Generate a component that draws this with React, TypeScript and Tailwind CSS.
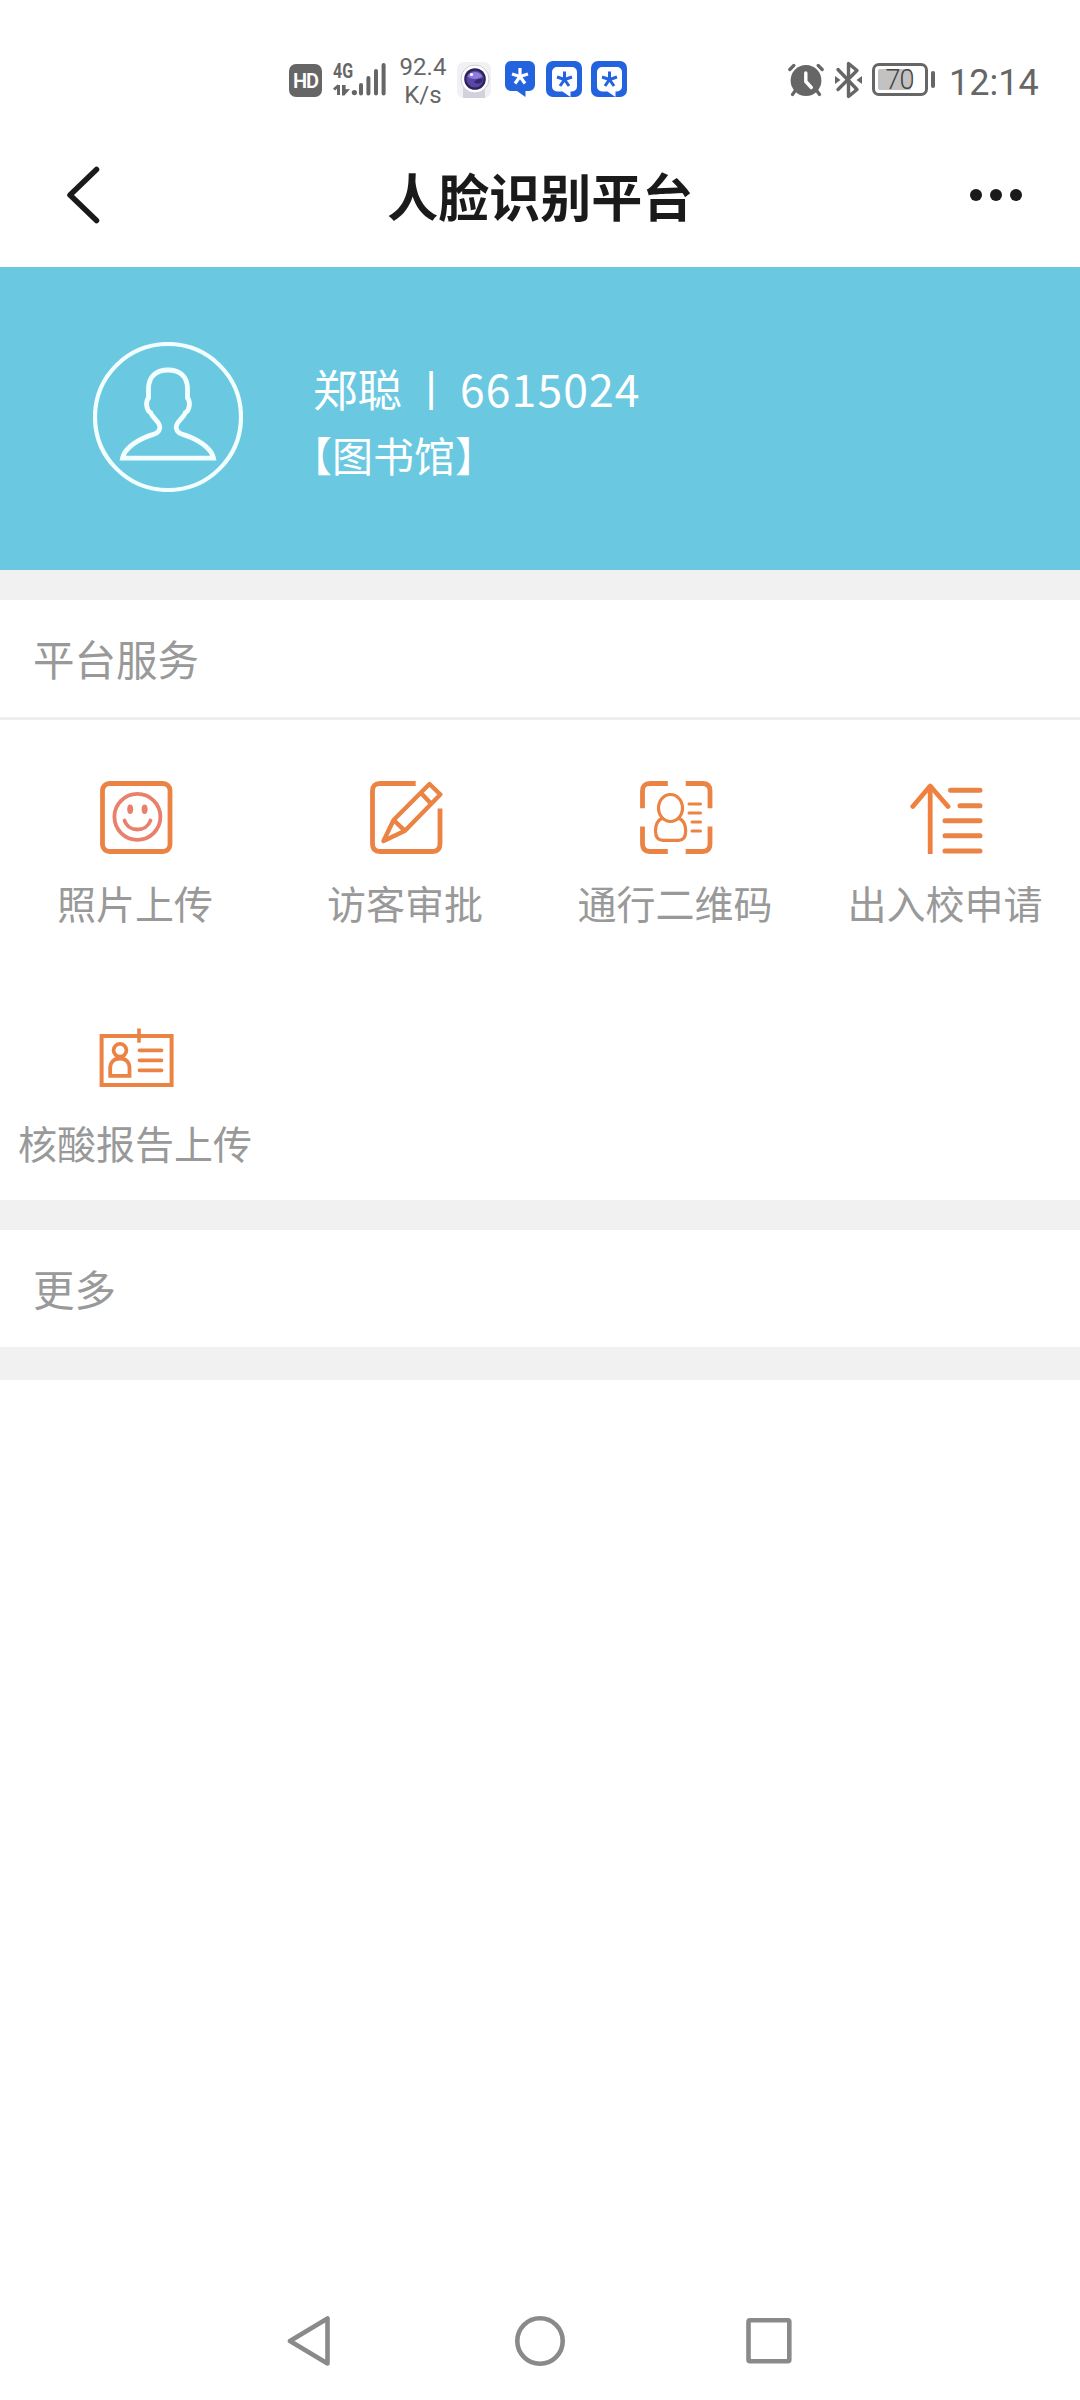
import type { ReactNode } from "react";

const ORANGE = "#eb8344";

function SignalIcon() {
  return (
    <svg width="54" height="34" viewBox="0 0 54 34" fill="#666">
      <path d="M5.5 23v10M5.5 23.5L1 27.5" stroke="#666" strokeWidth="3" fill="none" />
      <path d="M9 23h3.6v4.2l4.4-.2-5.6 6.4H9z" />
      <circle cx="21.4" cy="30.6" r="2.6" />
      <rect x="26" y="21" width="4" height="12.6" rx="2" />
      <rect x="33.4" y="14" width="4" height="19.6" rx="2" />
      <rect x="41" y="7" width="4" height="26.6" rx="2" />
      <rect x="48.6" y="1" width="4" height="32.6" rx="2" />
    </svg>
  );
}

function CameraIcon() {
  return (
    <svg width="36" height="38" viewBox="0 0 36 38">
      <rect x="1" y="1" width="34" height="36" rx="7" fill="#f1f1f4" />
      <path d="M7 26h22v11H7z" fill="#d3d2dc" />
      <circle cx="19" cy="18" r="14" fill="#fff" stroke="#cfced8" />
      <circle cx="19" cy="18" r="10.8" fill="#2b2358" />
      <circle cx="19" cy="18" r="8.6" fill="#5b45a6" />
      <path d="M11.5 15.5a8.4 8.4 0 0 1 15 0c-4 2.5-9 4-15 0z" fill="#8f7bd8" />
      <path d="M18 21a6 6 0 0 0 8 0l1-3c-3-1-7 0-9 3z" fill="#33286e" />
      <circle cx="15.5" cy="13.5" r="1.6" fill="#fff" />
    </svg>
  );
}

function BubbleIcon() {
  return (
    <svg width="30" height="36" viewBox="0 0 30 36">
      <path
        d="M6 0h18a6 6 0 0 1 6 6v18a6 6 0 0 1-6 6h-3.5v6L12 30H6a6 6 0 0 1-6-6V6a6 6 0 0 1 6-6z"
        fill="#2363de"
      />
      <path
        d="M15 7v8.5M7 13l8 2.5M23 13l-8 2.5M15 15.5l-5 7M15 15.5l5 7"
        stroke="#fff"
        strokeWidth="3.2"
      />
    </svg>
  );
}

function BoxedBubbleIcon() {
  return (
    <svg width="36" height="36" viewBox="0 0 36 36">
      <rect width="36" height="36" rx="7" fill="#2363de" />
      <path
        d="M11 6h15a5 5 0 0 1 5 5v14.5a5 5 0 0 1-5 5h-1.5V36l-8-5.5H11a5 5 0 0 1-5-5V11a5 5 0 0 1 5-5z"
        fill="#fff"
      />
      <path
        d="M18.5 10.5V18M11 16l7.5 2.5M26 16l-7.5 2.5M18.5 18.5L14 25M18.5 18.5L23 25"
        stroke="#2363de"
        strokeWidth="3"
      />
    </svg>
  );
}

function AlarmIcon() {
  return (
    <svg width="36" height="34" viewBox="0 0 36 34" fill="none" strokeLinecap="round">
      <circle cx="18" cy="17.5" r="15.4" fill="#666" />
      <path
        d="M1.8 6.5l4-4M34.2 6.5l-4-4M7 28l-2.5 3.5M29 28l2.5 3.5"
        stroke="#666"
        strokeWidth="3.2"
      />
      <path d="M17.8 10v8.5l5.5 6" stroke="#fff" strokeWidth="3.4" />
    </svg>
  );
}

function BluetoothIcon() {
  return (
    <svg width="27" height="38" viewBox="0 0 27 38" fill="none">
      <path
        d="M3 8.5L22 28.5L13.5 35.5V2.5L22 9.5L3 28.5"
        stroke="#666"
        strokeWidth="3.4"
        strokeLinejoin="round"
        strokeLinecap="round"
      />
      <path d="M0 15l5.5 4L0 23zM27 15l-5.5 4 5.5 4z" fill="#666" />
    </svg>
  );
}

function StatusBar() {
  return (
    <div className="flex h-[120px] items-start pt-[61px] pl-[289px] font-[Roboto,sans-serif] text-[#666]">
      <div className="mt-[3px] flex size-[33px] items-center justify-center rounded-[7px] bg-[#666] text-[20px] font-semibold tracking-[-1px] text-white">
        HD
      </div>
      <div className="relative ml-[11px] mt-px">
        <SignalIcon />
        <span className="absolute top-px left-0 origin-left scale-x-80 text-[20px] leading-4 font-bold">
          4G
        </span>
      </div>
      <div className="-mt-[7px] ml-[10px] w-[52px] text-center text-[24px] leading-[27.5px]">
        92.4
        <br />
        K/s
      </div>
      <div className="ml-[7px]">
        <CameraIcon />
      </div>
      <div className="ml-[13px]">
        <BubbleIcon />
      </div>
      <div className="ml-[11px]">
        <BoxedBubbleIcon />
      </div>
      <div className="ml-[9px]">
        <BoxedBubbleIcon />
      </div>
      <div className="mt-[2px] ml-[161px]">
        <AlarmIcon />
      </div>
      <div className="ml-[11px]">
        <BluetoothIcon />
      </div>
      <div className="relative mt-[2px] ml-[10px] h-[33px] w-[56px] rounded-[7px] border-[3.5px] border-[#666] p-[3px]">
        <div className="h-full w-[33px] rounded-[2px] bg-[#c2c2c2]" />
        <span className="absolute inset-0 pr-px text-center text-[27px] leading-[29px] font-light tracking-[-1px] text-[#444]">
          70
        </span>
      </div>
      <div className="mt-[10px] ml-[3px] h-[17px] w-1 rounded-full bg-[#666]" />
      <div className="mt-[3px] ml-[14px] text-[36px] leading-[38px] whitespace-nowrap">12:14</div>
    </div>
  );
}

function TitleBar() {
  return (
    <header className="flex h-[147px] items-start justify-between pr-[58px] pl-[66px] text-[#1a1a1a]">
      <svg className="mt-[46px]" width="34" height="58" viewBox="0 0 34 58" fill="none">
        <path
          d="M30.5 3.5L4 29l26.5 25.5"
          stroke="#1a1a1a"
          strokeWidth="5.5"
          strokeLinecap="round"
          strokeLinejoin="round"
        />
      </svg>
      <h1 className="mt-[39px] ml-[10px] text-[51px] leading-[72px] font-bold">人脸识别平台</h1>
      <div className="mt-[69px] flex gap-[8.5px]">
        <span className="size-[11.5px] rounded-full bg-[#1a1a1a]" />
        <span className="size-[11.5px] rounded-full bg-[#1a1a1a]" />
        <span className="size-[11.5px] rounded-full bg-[#1a1a1a]" />
      </div>
    </header>
  );
}

function Profile() {
  return (
    <section className="flex h-[303px] items-start bg-[#6ac9e1] pl-[93px] text-white">
      <svg className="mt-[75px]" width="150" height="150" viewBox="0 0 150 150" fill="none" stroke="#f2feff">
        <circle cx="75" cy="75" r="73" strokeWidth="4.2" />
        <path
          d="M75 28C62 28 56 35 55.5 46V56C52.5 59 53 68 57.5 70.5C60 77 67.5 80 66.8 86C66 92 60 92 53 95C41 100 31 108 29.5 116.2H120.5C119 108 109 100 97 95C90 92 84 92 83.2 86C82.5 80 90 77 92.5 70.5C97 68 97.5 59 94.5 56V46C94 35 88 28 75 28Z"
          strokeWidth="4.8"
        />
      </svg>
      <div className="mt-[87px] ml-[70px] whitespace-nowrap">
        <div className="flex h-[67px] items-center text-[44.5px] leading-[66px]">
          <span>郑聪</span>
          <span className="ml-[23px] w-[12px] text-center font-[Roboto,sans-serif] text-[47px]">|</span>
          <span className="ml-[23px] tracking-[1.1px]">6615024</span>
        </div>
        <div className="-ml-[22px] text-[41px] leading-[66px]">【图书馆】</div>
      </div>
    </section>
  );
}

function ServiceIcon({ width = 73, height = 73, children }: { width?: number; height?: number; children: ReactNode }) {
  return (
    <svg
      width={width}
      height={height}
      viewBox={`0 0 ${width} ${height}`}
      fill="none"
      stroke={ORANGE}
      strokeWidth="4.8"
    >
      {children}
    </svg>
  );
}

const services = [
  {
    title: "照片上传",
    icon: (
      <ServiceIcon>
        <rect x="2.5" y="2.5" width="67.5" height="68" rx="7" />
        <g stroke="#e9806c" strokeWidth="3.8" strokeLinecap="round">
          <circle cx="37.4" cy="35.8" r="23" />
          <path d="M24.5 39.5C28.5 51.5 46.5 51.5 50.5 39.5" />
        </g>
        <ellipse cx="30.2" cy="28.3" rx="3" ry="4.8" fill="#e9806c" stroke="none" />
        <ellipse cx="44.6" cy="28.3" rx="3" ry="4.8" fill="#e9806c" stroke="none" />
      </ServiceIcon>
    ),
  },
  {
    title: "访客审批",
    icon: (
      <ServiceIcon>
        <path d="M45.7 2.5H10Q2.5 2.5 2.5 10V63Q2.5 70.5 10 70.5H62.5Q70 70.5 70 63V27.5" />
        <path d="M59.5 3L70.3 13.5L35 49.7L13.5 60L23.6 39Z" strokeWidth="4.4" strokeLinejoin="round" />
        <path d="M23.6 39L34.7 49.7M51.5 12.5L61 22.5" strokeWidth="4.4" />
      </ServiceIcon>
    ),
  },
  {
    title: "通行二维码",
    icon: (
      <ServiceIcon>
        <path d="M27.8 2.5H10Q2.5 2.5 2.5 10V27.3M45.7 2.5H62.5Q70 2.5 70 10V27.3M2.5 45.5V63Q2.5 70.5 10 70.5H27.8M45.7 70.5H62.5Q70 70.5 70 63V45.5" />
        <g strokeWidth="3.2" strokeLinecap="round">
          <ellipse cx="30.5" cy="27" rx="12" ry="13.5" />
          <path d="M21.5 37.5C16.5 40 15.5 44 15.5 50C15.5 56 18 59.3 23 59.3H38.5C43.5 59.3 45.7 56 45.7 50C45.7 44 44.5 40 39.5 37.5" />
          <path d="M49 23H60.5M49 32H60.5M52 41H60.5M52 50H60.5" strokeWidth="3" />
        </g>
      </ServiceIcon>
    ),
  },
  {
    title: "出入校申请",
    icon: (
      <ServiceIcon>
        <path d="M20.2 4V73" stroke="#f0803f" />
        <path d="M2.8 25.5L20.2 5L38 25.5" stroke="#f0803f" strokeLinecap="round" strokeLinejoin="round" />
        <path
          d="M40.5 9.3H70M50 24.7H70M35 39.7H70M35 54.7H70M35 70H70"
          strokeWidth="5"
          strokeLinecap="round"
        />
      </ServiceIcon>
    ),
  },
  {
    title: "核酸报告上传",
    icon: (
      <ServiceIcon width={75} height={60}>
        <rect x="2.6" y="8" width="70" height="49" strokeWidth="4" />
        <path d="M40 .5V14.7" strokeWidth="3.6" />
        <g strokeWidth="3.8" strokeLinecap="round">
          <circle cx="21" cy="22.3" r="6.4" />
          <path d="M11.2 47.8V40C11.2 34 15 30.5 21 30.5C27 30.5 30.5 34 30.5 40V47.8Z" />
          <path d="M40.5 22.3H62.5M40.5 32.3H62.5M40.5 42.3H62.5" />
        </g>
      </ServiceIcon>
    ),
  },
];

function SectionTitle({ children }: { children: ReactNode }) {
  return <h2 className="flex h-[117px] items-center pl-[33px] text-[41.5px] text-[#999]">{children}</h2>;
}

function NavBar() {
  return (
    <nav className="mt-auto flex h-[118px] items-center justify-center">
      <svg width="506" height="52" viewBox="0 0 506 52" fill="none" stroke="#8a8a8a" strokeWidth="4.6" strokeLinejoin="round">
        <path d="M40.5 3.5V48.5L3 26Z" />
        <circle cx="253" cy="26" r="22.7" />
        <rect x="461.5" y="5.3" width="40.8" height="41" rx="1.5" />
      </svg>
    </nav>
  );
}

export default function App() {
  return (
    <main className="flex h-[2400px] w-[1080px] flex-col overflow-hidden bg-white font-['Noto_Sans_CJK_SC',sans-serif]">
      <StatusBar />
      <TitleBar />
      <Profile />
      <div className="h-[30px] bg-[#f1f1f1]" />

      <SectionTitle>平台服务</SectionTitle>
      <div className="grid grid-cols-4 border-t-[3px] border-[#eee]">
        {services.map((s) => (
          <div key={s.title} className="flex h-[240px] flex-col items-center">
            <div className="flex h-[153px] items-center pt-[42px] pl-[3px]">{s.icon}</div>
            <p className="text-[39px] leading-[58px] whitespace-nowrap text-[#999]">{s.title}</p>
          </div>
        ))}
      </div>
      <div className="h-[30px] bg-[#f1f1f1]" />

      <SectionTitle>更多</SectionTitle>
      <div className="h-[33px] bg-[#f1f1f1]" />
      <NavBar />
    </main>
  );
}
